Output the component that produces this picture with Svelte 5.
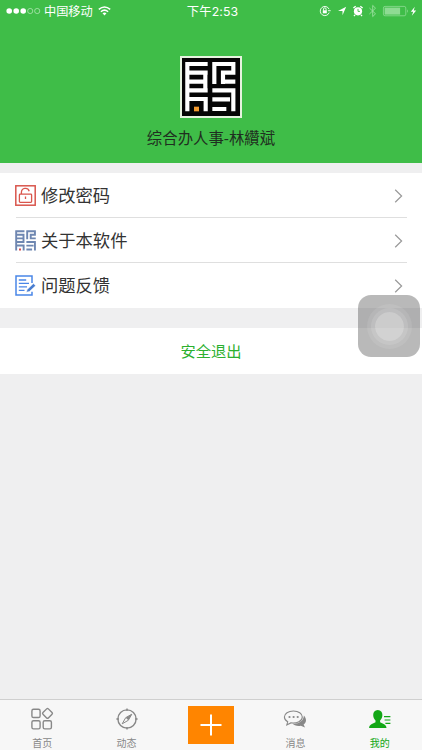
<script>
  const menu = [
    { id: 'password', label: '修改密码' },
    { id: 'about', label: '关于本软件' },
    { id: 'feedback', label: '问题反馈' }
  ];

  const tabs = [
    { id: 'home', label: '首页' },
    { id: 'news', label: '动态' },
    { id: 'add', label: '' },
    { id: 'message', label: '消息' },
    { id: 'mine', label: '我的' }
  ];

  let active = $state('mine');
</script>

{#snippet maze()}
  <path d="M52 36V184M46 42H113M46 68H113M46 95H106M46 121H113M106 62V127M46 147H113M107 141V184" />
  <path d="M133 36V102M127 42H196M190 36V74M196 68H159V102M159 95H196" />
  <path d="M127 121H196M190 115V184M127 148H180M127 177H169" />
{/snippet}

<div class="app">
  <header class="profile">
    <div class="status">
      <div class="status__left">
        <svg width="36" height="8" viewBox="0 0 36 8">
          <g fill="#fff"><circle cx="3.2" cy="4" r="2.8" /><circle cx="10.2" cy="4" r="2.8" /><circle cx="17.2" cy="4" r="2.8" /></g>
          <g fill="none" stroke="#d3f2d5" stroke-width=".6"><circle cx="24.2" cy="4" r="2.6" /><circle cx="31.2" cy="4" r="2.6" /></g>
        </svg>
        <span class="carrier">中国移动</span>
        <svg class="wifi" width="13" height="10" viewBox="0 0 13 10" fill="none" stroke="#fff" stroke-width="1.5">
          <path d="M.8 3.4Q6.5-1.4 12.2 3.4M2.9 5.7Q6.5 2.6 10.1 5.7" />
          <path d="M4.5 7.3Q6.5 5.6 8.5 7.3L6.5 9.6Z" fill="#fff" stroke="none" />
        </svg>
      </div>
      <span class="time">下午2:53</span>
      <svg class="status__right" width="104" height="14" viewBox="0 0 104 14">
        <g fill="none" stroke="#fff" stroke-width=".9">
          <path d="M11.1 5.2A4.6 4.6 0 1 0 11.2 8.6M9.9 6.7H12.7" />
          <path d="M5.5 6.5V5.1a1.3 1.3 0 0 1 2.6 0v1.4" />
        </g>
        <rect x="4.8" y="6.3" width="4" height="3" fill="#fff" />
        <path d="M28.2 2.7L24.5 11.2V7H20Z" fill="#fff" />
        <circle cx="40" cy="7.3" r="4.1" fill="#fff" />
        <path d="M35.4 4.1L37.7 2.2M44.6 4.1L42.3 2.2M37 10.8L36 12M43 10.8L44 12" stroke="#fff" stroke-width="1.3" />
        <path d="M40 4.9V7.4H42" fill="none" stroke="#3fbd48" stroke-width=".9" />
        <path d="M51.4 4L57.5 9.8L54.7 12.6V1.4L57.5 4.2L51.4 10" fill="none" stroke="#9be09f" stroke-width=".9" />
        <rect x="65.4" y="2.4" width="22.4" height="9.4" rx="1.6" fill="none" stroke="#91dc96" stroke-width=".8" />
        <rect x="66.6" y="3.6" width="15.5" height="7" fill="#8edb93" />
        <path d="M89 5.2q1.8 1.8 0 3.8z" fill="#91dc96" />
        <path d="M96.8 2.8L92.8 7.8H95.2L93.8 11.7L98.2 6.4H95.7Z" fill="#fff" />
      </svg>
    </div>
    <svg class="avatar" width="62" height="62" viewBox="30 18 186 186">
      <rect x="30" y="18" width="186" height="186" fill="#e6f3df" />
      <rect x="36" y="24" width="174" height="174" fill="#050505" />
      <g fill="none" stroke="#fff" stroke-width="12.5">{@render maze()}</g>
      <rect x="72" y="170" width="15" height="14" fill="#f29a2e" />
    </svg>
    <h1 class="name">综合办人事-林纘斌</h1>
  </header>

  <nav class="menu">
    {#each menu as item (item.id)}
      <button type="button" class="menu__row">
        <svg class="menu__icon" width="21" height="21" viewBox="0 0 21 21" fill="none">
          {#if item.id === 'password'}
            <rect x=".8" y=".8" width="19.4" height="19.4" stroke="#d9564d" stroke-width="1.5" />
            <rect x="4.4" y="9.1" width="12.2" height="8.3" rx=".8" stroke="#d9564d" stroke-width="1.3" />
            <path d="M6.4 9V7.3a4 4 0 0 1 7.8-1.1M10.5 11.6V14" stroke="#d9564d" stroke-width="1.3" />
          {:else if item.id === 'about'}
            <g transform="translate(-5.9 -4.5) scale(.136)" stroke="#6f87b1" stroke-width="14">{@render maze()}</g>
            <rect x="4" y="18.5" width="2" height="2" fill="#d94d4d" />
          {:else}
            <path d="M17 8V1H1V20H17V16.8" stroke="#4a86e8" stroke-width="1.5" />
            <path d="M3.8 5H11.2M3.8 8.4H14M3.8 11.8H12M3.8 15.4H9.5" stroke="#4a86e8" stroke-width="1.3" />
            <path d="M12.2 14.6L18.4 8.6L20.6 10.8L14.4 16.5L11.4 17.2Z" fill="#4a7ed0" stroke="#fff" stroke-width=".5" />
          {/if}
        </svg>
        <span class="menu__label">{item.label}</span>
        <svg class="chevron" width="9" height="14" viewBox="0 0 9 14">
          <path d="M1.2.8L7.6 7L1.2 13.2" fill="none" stroke="#999" stroke-width="1.2" />
        </svg>
      </button>
    {/each}
  </nav>

  <button type="button" class="logout">安全退出</button>

  <div class="assistive"><i></i></div>

  <footer class="tabs">
    {#each tabs as tab (tab.id)}
      <button type="button" class="tab" class:tab--active={active === tab.id} onclick={() => (active = tab.id)}>
        {#if tab.id === 'add'}
          <span class="add">
            <svg width="22" height="22" viewBox="0 0 22 22"><path d="M11 .5V21.5M.5 11H21.5" stroke="#fff" stroke-width="2" /></svg>
          </span>
        {:else}
          <svg class="tab__icon" width="24" height="24" viewBox="0 0 24 24" fill="none" stroke="currentColor" stroke-width="1.4">
            {#if tab.id === 'home'}
              <rect x="1.9" y="2.3" width="8.2" height="8.2" rx="1.6" />
              <rect x="1.9" y="13.7" width="8.2" height="8.2" rx="1.6" />
              <rect x="13.2" y="13.7" width="8.2" height="8.2" rx="1.6" />
              <rect x="13.7" y="2.6" width="7.6" height="7.6" rx="1.2" transform="rotate(45 17.5 6.4)" />
            {:else if tab.id === 'news'}
              <circle cx="12" cy="12" r="9.1" />
              <path d="M12 1.4V4M12 20V22.6M1.4 12H4M20 12H22.6" />
              <path d="M16.8 7.2L13.3 13.3L7.2 16.8L10.7 10.7Z" stroke-width="1" />
              <path d="M16.8 7.2L13.3 13.3L10.7 10.7Z" fill="currentColor" stroke="none" />
            {:else if tab.id === 'message'}
              <path d="M20.9 8.5C24.4 12.4 23 16.2 20.6 17.4L22 20.6L17.8 18.7C14.3 19.4 10.9 18.3 9.5 16.6C15 17.2 20.8 14.2 20.9 8.5Z" fill="currentColor" stroke="none" />
              <path d="M10.4 4C5.3 4 1.4 6.5 1.4 10C1.4 12.1 2.7 13.7 4.7 14.8L3.8 18L7.8 15.9C14.2 16.7 19.3 14 19.3 10C19.3 6.5 15.5 4 10.4 4Z" stroke-width="1.1" fill="#f7f7f7" />
              <g fill="currentColor" stroke="none"><circle cx="6.5" cy="10" r="1.1" /><circle cx="10.6" cy="10" r="1.1" /><circle cx="14.7" cy="10" r="1.1" /></g>
            {:else}
              <path d="M9.8 2.9C6.8 2.9 5.2 5 5.2 8C5.2 10.1 6 12 7.5 13.4V15.2C5 16.6 1.2 17.2 1.1 21H18.5C18.4 17.2 14.6 16.6 12.1 15.2V13.4C13.6 12 14.4 10.1 14.4 8C14.4 5 12.8 2.9 9.8 2.9Z" fill="currentColor" stroke="none" />
              <path d="M16 9.7H22.4M16.6 13H22.4M17.4 16.3H22.4" stroke-width="1.2" />
            {/if}
          </svg>
          <span class="tab__label">{tab.label}</span>
        {/if}
      </button>
    {/each}
  </footer>
</div>

<style>
  :global(body) {
    margin: 0;
  }

  .app {
    position: relative;
    display: flex;
    flex-direction: column;
    width: 422px;
    height: 750px;
    overflow: hidden;
    background: #efeff0;
    font-family: 'Liberation Sans', 'Noto Sans CJK SC', sans-serif;
  }

  button {
    appearance: none;
    border: 0;
    margin: 0;
    padding: 0;
    background: none;
    font-family: inherit;
    cursor: pointer;
  }

  svg {
    display: block;
    flex: none;
  }

  .profile {
    display: flex;
    flex-direction: column;
    align-items: center;
    height: 163px;
    background: #3fbd48;
  }

  .status {
    display: grid;
    grid-template-columns: 1fr auto 1fr;
    align-items: center;
    box-sizing: border-box;
    width: 100%;
    height: 22px;
    padding-left: 6px;
    color: #fff;
  }

  .status__left {
    display: flex;
    align-items: center;
  }

  .carrier {
    margin-left: 2px;
    padding-top: 1px;
    font-size: 12.2px;
    line-height: 20px;
  }

  .wifi {
    margin-left: 5px;
  }

  .time {
    margin-right: 3px;
    padding-top: 1px;
    font-family: Inter, 'Noto Sans CJK SC', sans-serif;
    font-size: 12.3px;
    line-height: 20px;
    letter-spacing: 0.1px;
  }

  .status__right {
    justify-self: end;
  }

  .avatar {
    margin-top: 34px;
  }

  .name {
    margin: 10px 0 0;
    color: #1f2f20;
    font-size: 15.4px;
    font-weight: 400;
    line-height: 22px;
  }

  .menu {
    margin-top: 10px;
    background: #fff;
  }

  .menu__row {
    display: flex;
    align-items: center;
    width: 391px;
    height: 45px;
    margin-left: 16px;
    border-bottom: 1px solid #dfdfdf;
    text-align: left;
  }

  .menu__row:last-child {
    border-bottom-color: transparent;
  }

  .menu__icon {
    margin-left: -1px;
  }

  .menu__label {
    flex: 1;
    margin-left: 5px;
    padding-top: 2px;
    color: #333;
    font-size: 17.3px;
    line-height: 24px;
  }

  .chevron {
    margin: 2px 4px 0 0;
  }

  .logout {
    height: 46px;
    margin-top: 20px;
    padding-bottom: 2px;
    background: #fff;
    color: #2bb02f;
    font-size: 15.3px;
  }

  .assistive {
    position: absolute;
    top: 295px;
    left: 358px;
    display: flex;
    align-items: center;
    justify-content: center;
    width: 62px;
    height: 62px;
    border-radius: 13px;
    background: rgba(80, 80, 80, 0.4);
  }

  .assistive i {
    width: 29px;
    height: 29px;
    border-radius: 50%;
    background: rgba(255, 255, 255, 0.36);
    box-shadow:
      0 0 0 4px rgba(255, 255, 255, 0.12),
      0 0 0 8px rgba(255, 255, 255, 0.09);
  }

  .tabs {
    display: flex;
    box-sizing: border-box;
    height: 51px;
    margin-top: auto;
    border-top: 1px solid #cfcfcf;
    background: #f7f7f7;
  }

  .tab {
    display: flex;
    flex: 1;
    flex-direction: column;
    align-items: center;
    color: #888;
  }

  .tab__icon {
    margin-top: 7px;
  }

  .tab__label {
    margin-top: 5px;
    font-size: 10px;
    line-height: 15px;
  }

  .tab--active {
    color: #13a716;
  }

  .add {
    display: flex;
    align-items: center;
    justify-content: center;
    width: 46px;
    height: 38px;
    margin-top: 6px;
    background: #ff8500;
  }
</style>
